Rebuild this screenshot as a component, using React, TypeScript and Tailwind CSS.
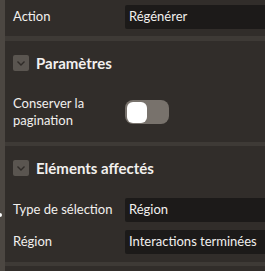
const Chevron = () => (
  <div className="h-4 w-4 rounded-[2px] bg-[#5a5550] flex items-center justify-center">
    <svg viewBox="0 0 16 16" className="h-4 w-4" fill="none" stroke="#2f2b28" strokeWidth="1.4">
      <path d="M4.5 6.5 8 10l3.5-3.5" />
    </svg>
  </div>
)

const Field = ({ label, value }: { label: string; value: string }) => (
  <div className="flex items-center h-6">
    <span className="w-[120px] shrink-0 pl-[8px] whitespace-nowrap">{label}</span>
    <div className="flex-1 h-6 bg-[#1c1a19] rounded-l-[2px] flex items-center pl-1 whitespace-nowrap">
      {value}
    </div>
  </div>
)

const Section = ({ title }: { title: string }) => (
  <div className="flex items-center gap-x-[7px] pl-[8px] h-4">
    <Chevron />
    <span className="font-bold text-[15px] leading-none">{title}</span>
  </div>
)

export default function App() {
  return (
    <div
      className="w-[265px] h-[271px] flex overflow-hidden text-[13px] text-[#f2f0ee]"
      style={{ fontFamily: 'Lato, sans-serif' }}
    >
      <div className="w-[5px] shrink-0 bg-[#4c4742] relative">
        <div className="absolute left-[-2px] top-[213px] h-[4px] w-[4px] rounded-full bg-white" />
      </div>
      <div className="flex-1 bg-[#312d2a] flex flex-col">
        <div className="pt-[5px]">
          <Field label="Action" value="Régénérer" />
        </div>
        <div className="mt-[7px] h-[5px] bg-[#3e3a36]" />

        <div className="mt-[14px]">
          <Section title="Paramètres" />
        </div>
        <div className="mt-[24px] flex items-center">
          <span className="w-[120px] shrink-0 pl-[8px] leading-[17px]">
            Conserver la
            <br />
            pagination
          </span>
          <div className="h-6 w-11 rounded-lg bg-[#78726c] p-[1px] pl-[2px] flex items-center">
            <div className="h-[21px] w-5 rounded-md bg-white" />
          </div>
        </div>
        <div className="mt-[13px] h-[4px] bg-[#3e3a36]" />

        <div className="mt-[14px]">
          <Section title="Eléments affectés" />
        </div>
        <div className="mt-[22px] flex flex-col gap-y-2">
          <Field label="Type de sélection" value="Région" />
          <Field label="Région" value="Interactions terminées" />
        </div>
        <div className="mt-[8px] h-[4px] bg-[#3e3a36]" />
      </div>
    </div>
  )
}
